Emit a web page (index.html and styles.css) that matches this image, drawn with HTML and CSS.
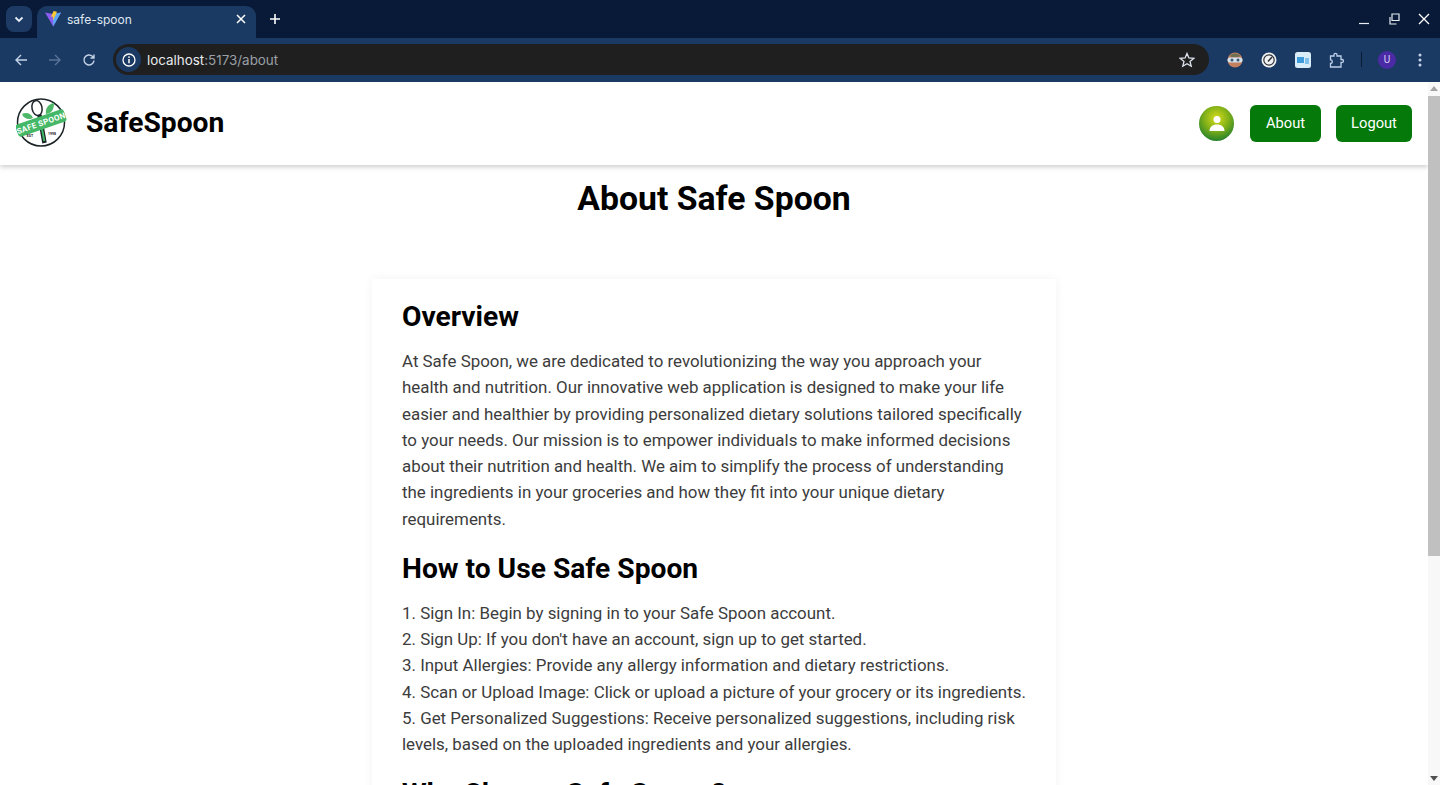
FILE: index.html
```html
<!DOCTYPE html>
<html lang="en">
<head>
    <meta charset="UTF-8">
    <meta name="viewport" content="width=device-width, initial-scale=1.0">
    <title>safe-spoon</title>
    <link rel="stylesheet" href="styles.css">
</head>
<body>
    <!-- Browser tab strip -->
    <div class="tabstrip">
        <div class="tab-search">
            <svg width="12" height="12" viewBox="0 0 12 12"><path d="M2.500 4.500 6 8l3.500-3.500" fill="none" stroke="#e6edf7" stroke-width="1.800"/></svg>
        </div>
        <div class="tab">
            <svg class="favicon" width="16" height="16" viewBox="0 0 16 16">
                <path d="M0 1.500 8 3 16 1.500 8.200 15.500z" fill="#8a5cf0"/>
                <path d="M8 3 16 1.500 8.200 15.500z" fill="#5aa7f5"/>
                <path d="M8.600 0 12 .8 8 9.500 7.800 5.500 6 5.800z" fill="#ffc931"/>
            </svg>
            <span class="tab-title">safe-spoon</span>
            <svg class="tab-close" width="10" height="10" viewBox="0 0 10 10"><path d="M1 1l8 8M9 1 1 9" stroke="#fff" stroke-width="1.500"/></svg>
        </div>
        <svg class="new-tab" width="12" height="12" viewBox="0 0 12 12"><path d="M6 1v10M1 6h10" stroke="#fff" stroke-width="1.600"/></svg>
        <div class="window-btns">
            <svg width="12" height="12" viewBox="0 0 12 12"><path d="M1 10.500h10" stroke="#e8edf5" stroke-width="1.200"/></svg>
            <svg width="12" height="12" viewBox="0 0 12 12"><path d="M4 1h7v6.500H4z M2 4v7h6.500" fill="none" stroke="#e8edf5" stroke-width="1.200"/></svg>
            <svg width="12" height="12" viewBox="0 0 12 12"><path d="M1 1l10 10M11 1 1 11" stroke="#fff" stroke-width="1.300"/></svg>
        </div>
    </div>

    <!-- Browser toolbar -->
    <div class="toolbar">
        <svg class="nav-icon" width="14" height="14" viewBox="0 0 14 14"><path d="M13 7H2M7 2 2 7l5 5" fill="none" stroke="#c4d3e8" stroke-width="1.400"/></svg>
        <svg class="nav-icon" width="14" height="14" viewBox="0 0 14 14"><path d="M1 7h11M7 2l5 5-5 5" fill="none" stroke="#587398" stroke-width="1.400"/></svg>
        <svg class="nav-icon" width="14" height="14" viewBox="0 0 14 14"><path d="M12 7.500A5 5 0 1 1 10.400 3.300L12 5M12 1.500V5H8.500" fill="none" stroke="#c4d3e8" stroke-width="1.400"/></svg>
        <div class="omnibox">
            <div class="site-info">
                <svg width="14" height="14" viewBox="0 0 14 14"><circle cx="7" cy="7" r="6" fill="none" stroke="#fff" stroke-width="1.300"/><path d="M7 6v4.200" stroke="#fff" stroke-width="1.500"/><circle cx="7" cy="4.100" r=".9" fill="#fff"/></svg>
            </div>
            <span class="url">localhost<span class="url-path">:5173/about</span></span>
            <svg class="star" width="16" height="16" viewBox="0 0 16 16"><path d="M8 1.500 9.900 6l4.800.4-3.700 3.100 1.200 4.700L8 11.700l-4.200 2.500L5 9.500 1.300 6.400 6.100 6z" fill="none" stroke="#dfe5ee" stroke-width="1.300"/></svg>
        </div>
        <div class="ext-icons">
            <svg width="16" height="16" viewBox="0 0 16 16"><circle cx="8" cy="8" r="7.500" fill="#c47f5e"/><path d="M3 3.500A7 7 0 0 1 13 3.500L12 5H4z" fill="#6d6f52"/><rect x=".5" y="5.500" width="15" height="5" rx="2.500" fill="#cfe2ee"/><circle cx="5" cy="8" r="1.500" fill="#41586e"/><circle cx="11" cy="8" r="1.500" fill="#41586e"/></svg>
            <svg width="16" height="16" viewBox="0 0 16 16"><circle cx="8" cy="8" r="7.500" fill="#f2f2f2"/><circle cx="8" cy="8" r="5.200" fill="none" stroke="#2c3138" stroke-width="1.200"/><path d="M7 9.500 11 5" stroke="#2c3138" stroke-width="1.500"/></svg>
            <svg width="16" height="16" viewBox="0 0 16 16"><rect width="16" height="16" rx="2.500" fill="#d9edf8"/><rect x="2" y="5" width="7" height="6" fill="#3d9bdc"/><rect x="10" y="6" width="4" height="6" fill="#7fc1ea"/></svg>
            <svg width="16" height="16" viewBox="0 0 16 16"><path d="M1.500 4H5V2.800a1.500 1.500 0 0 1 3 0V4h4v3.500h1a1.500 1.500 0 0 1 0 3h-1V15H1.500v-3.500a1.800 1.800 0 0 0 0-3.600z" fill="none" stroke="#bcd0ea" stroke-width="1.300"/></svg>
            <span class="ext-sep"></span>
            <span class="profile">U</span>
            <svg class="menu-dots" width="4" height="14" viewBox="0 0 4 14"><circle cx="2" cy="2" r="1.500" fill="#c4d3e8"/><circle cx="2" cy="7" r="1.500" fill="#c4d3e8"/><circle cx="2" cy="12" r="1.500" fill="#c4d3e8"/></svg>
        </div>
    </div>

    <div class="viewport">
        <div class="page">
            <header class="site-header">
                <div class="brand">
                    <svg class="logo" width="52" height="52" viewBox="0 0 52 52">
                        <circle cx="25" cy="25.500" r="23.500" fill="#fff" stroke="#1c2428" stroke-width="1.500"/>
                        <path d="M6 17c4-2 9-1 11 4-4 2-9 1-11-4z" fill="#4cb868"/>
                        <path d="M38 6c0 6-2 10-8 11-1-5 2-10 8-11z" fill="#4cb868"/>
                        <ellipse cx="21" cy="11" rx="5" ry="7.500" transform="rotate(-12 21 11)" fill="#fff" stroke="#1c2428" stroke-width="1.500"/>
                        <path d="M23.500 18 28.500 46" stroke="#1c2428" stroke-width="4.500"/>
                        <path d="M25.800 31 28.300 44" stroke="#3fb565" stroke-width="2"/>
                        <rect x="-.5" y="19.500" width="51" height="13" rx="3" transform="rotate(-19 25 26)" fill="#45b868"/>
                        <text class="logo-text" x="25" y="29" transform="rotate(-19 25 26)" text-anchor="middle">SAFE SPOON</text>
                        <text class="logo-small" x="14" y="40" text-anchor="middle">EST</text>
                        <text class="logo-small" x="36" y="37.500" text-anchor="middle">1998</text>
                    </svg>
                    <span class="brand-name">SafeSpoon</span>
                </div>
                <nav class="nav">
                    <span class="avatar">
                        <svg width="22" height="22" viewBox="0 0 22 22"><circle cx="11" cy="6.500" r="3.500" fill="#fff"/><path d="M3.500 18c0-4 3-6.500 7.500-6.500s7.500 2.500 7.500 6.500z" fill="#fff"/></svg>
                    </span>
                    <button class="nav-btn about-btn">About</button>
                    <button class="nav-btn logout-btn">Logout</button>
                </nav>
            </header>

            <main class="about">
                <h1>About Safe Spoon</h1>
                <section class="about-card">
                    <h2>Overview</h2>
                    <p>At Safe Spoon, we are dedicated to revolutionizing the way you approach your health and nutrition. Our innovative web application is designed to make your life easier and healthier by providing personalized dietary solutions tailored specifically to your needs. Our mission is to empower individuals to make informed decisions about their nutrition and health. We aim to simplify the process of understanding the ingredients in your groceries and how they fit into your unique dietary requirements.</p>
                    <h2>How to Use Safe Spoon</h2>
                    <p>1. Sign In: Begin by signing in to your Safe Spoon account.<br>
                    2. Sign Up: If you don't have an account, sign up to get started.<br>
                    3. Input Allergies: Provide any allergy information and dietary restrictions.<br>
                    4. Scan or Upload Image: Click or upload a picture of your grocery or its ingredients.<br>
                    5. Get Personalized Suggestions: Receive personalized suggestions, including risk levels, based on the uploaded ingredients and your allergies.</p>
                    <h2>Why Choose Safe Spoon?</h2>
                </section>
            </main>
        </div>

        <div class="scrollbar">
            <svg width="12" height="14" viewBox="0 0 12 14"><path d="M6 4 10 9H2z" fill="#a3a3a3"/></svg>
            <div class="scroll-thumb"></div>
            <div class="scroll-track"></div>
            <svg width="12" height="14" viewBox="0 0 12 14"><path d="M6 10 2 5h8z" fill="#505050"/></svg>
        </div>
    </div>
</body>
</html>
```

FILE: styles.css
```css
html, body {
    margin: 0;
    height: 785px;
    overflow: hidden;
}
body {
    font-family: Roboto, "Liberation Sans", sans-serif;
    background-color: #fff;
    display: flex;
    flex-direction: column;
}

/* browser chrome */
.tabstrip {
    height: 38px;
    background-color: #081a37;
    display: flex;
    align-items: flex-end;
    padding-left: 6px;
    flex-shrink: 0;
}
.tab-search {
    width: 26px;
    height: 26px;
    margin: 0 5px 6px 0;
    background-color: #1c3a63;
    border-radius: 8px;
    display: flex;
    align-items: center;
    justify-content: center;
}
.tab {
    width: 219px;
    height: 32px;
    background-color: #1b3a63;
    border-radius: 10px 10px 0 0;
    display: flex;
    align-items: center;
    padding: 0 10px 6px 8px;
    box-sizing: border-box;
}
.favicon {
    margin-right: 6px;
}
.tab-title {
    flex: 1;
    color: #dfe6f0;
    font-size: 12px;
    font-family: Inter, Roboto, sans-serif;
}
.new-tab {
    margin: 0 0 13px 13px;
}
.window-btns {
    margin-left: auto;
    display: flex;
    gap: 18px;
    padding-right: 10px;
    margin-bottom: 13px;
}
.toolbar {
    height: 44px;
    background-color: #1b3a63;
    display: flex;
    align-items: center;
    padding: 0 0 1px 14px;
    box-sizing: border-box;
    flex-shrink: 0;
}
.nav-icon {
    margin-right: 20px;
}
.omnibox {
    width: 1096px;
    height: 31px;
    margin-left: -3px;
    background-color: #1f1f20;
    border-radius: 16px;
    display: flex;
    align-items: center;
    padding: 0 14px 0 3px;
    box-sizing: border-box;
}
.site-info {
    width: 25px;
    height: 25px;
    border-radius: 50%;
    background-color: #1b3a63;
    display: flex;
    align-items: center;
    justify-content: center;
    margin-right: 6px;
}
.url {
    flex: 1;
    color: #e8eaed;
    font-size: 13.400px;
    font-family: Inter, Roboto, sans-serif;
}
.url-path {
    color: #9aa0a6;
}
.ext-icons {
    display: flex;
    align-items: center;
    gap: 18px;
    margin-left: 18px;
}
.ext-sep {
    width: 1px;
    height: 15px;
    background-color: #0b1b33;
    margin: 0 -2px;
}
.profile {
    width: 18px;
    height: 18px;
    border-radius: 50%;
    background-color: #4b2aa6;
    color: #d9d2f4;
    font-size: 10px;
    display: flex;
    align-items: center;
    justify-content: center;
}
.menu-dots {
    margin-left: 4px;
}

/* page */
.viewport {
    flex: 1;
    display: flex;
    min-height: 0;
}
.page {
    flex: 1;
    min-width: 0;
    overflow: hidden;
}
.site-header {
    height: 83px;
    background-color: #fff;
    box-shadow: 0 2px 5px rgba(0, 0, 0, 0.2);
    display: flex;
    align-items: center;
    justify-content: space-between;
    padding: 0 16px;
    box-sizing: border-box;
    position: relative;
}
.brand {
    display: flex;
    align-items: center;
    gap: 18px;
    padding-bottom: 2px;
}
.logo-text {
    font-family: Roboto, sans-serif;
    font-size: 8px;
    font-weight: 700;
    fill: #fff;
    letter-spacing: 0.3px;
}
.logo-small {
    font-family: Roboto, sans-serif;
    font-size: 3.500px;
    font-weight: 700;
    fill: #1c2428;
}
.brand-name {
    font-size: 28.200px;
    font-weight: 700;
    color: #000;
}
.nav {
    display: flex;
    align-items: center;
    gap: 15px;
}
.avatar {
    width: 35px;
    height: 35px;
    border-radius: 50%;
    background: radial-gradient(circle at 50% 35%, #d8dc1c, #7cae18 45%, #187a30 85%);
    display: flex;
    align-items: center;
    justify-content: center;
    margin-right: 1px;
}
.nav-btn {
    height: 37px;
    background-color: #057a0b;
    color: #fff;
    border: none;
    border-radius: 6px;
    font-family: Roboto, sans-serif;
    font-size: 14.700px;
    padding: 0 0 1px;
}
.about-btn {
    width: 71px;
}
.logout-btn {
    width: 76px;
}
.about {
    text-align: center;
}
.about h1 {
    margin: 0;
    padding-top: 14px;
    font-size: 33.750px;
    line-height: 40px;
    font-weight: 700;
    color: #000;
}
.about-card {
    width: 684px;
    margin: 60px auto 0;
    padding: 21px 30px 0;
    box-sizing: border-box;
    text-align: left;
    box-shadow: 0 0 10px rgba(0, 0, 0, 0.05);
    background-color: #fff;
}
.about-card h2 {
    margin: 0 0 15px;
    font-size: 28.200px;
    line-height: 33px;
    font-weight: 700;
    color: #000;
}
.about-card p {
    margin: 0 0 20px;
    font-size: 16.900px;
    line-height: 26.250px;
    color: #3c3c3c;
}

/* scrollbar */
.scrollbar {
    width: 12px;
    flex-shrink: 0;
    background-color: #f8f8f8;
    display: flex;
    flex-direction: column;
}
.scroll-thumb {
    height: 460px;
    background-color: #c0c0c0;
}
.scroll-track {
    flex: 1;
}
```
